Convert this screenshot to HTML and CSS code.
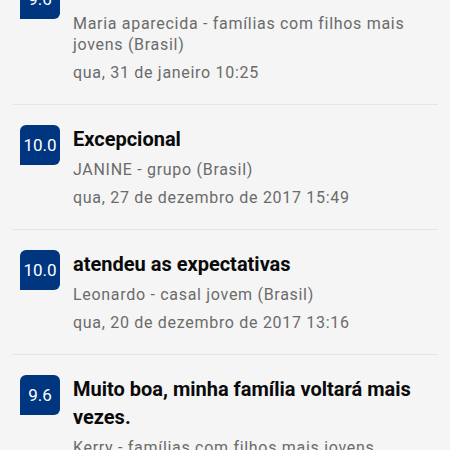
FILE: index.html
```html
<!DOCTYPE html>
<html>
  <head>
    <meta charset='utf-8' />
    <title>Avaliações</title>
    <link rel="stylesheet" href="styles.css">
  </head>
  <body>
    <main id='reviews'>
      <div class='review'>
        <div class='score'>9.6</div>
        <div class='body'>
          <div class='title'>Excelente</div>
          <div class='author'>Maria aparecida - famílias com filhos mais jovens (Brasil)</div>
          <div class='date'>qua, 31 de janeiro 10:25</div>
        </div>
      </div>
      <div class='review'>
        <div class='score'>10.0</div>
        <div class='body'>
          <div class='title'>Excepcional</div>
          <div class='author'>JANINE - grupo (Brasil)</div>
          <div class='date'>qua, 27 de dezembro de 2017 15:49</div>
        </div>
      </div>
      <div class='review'>
        <div class='score'>10.0</div>
        <div class='body'>
          <div class='title'>atendeu as expectativas</div>
          <div class='author'>Leonardo - casal jovem (Brasil)</div>
          <div class='date'>qua, 20 de dezembro de 2017 13:16</div>
        </div>
      </div>
      <div class='review'>
        <div class='score'>9.6</div>
        <div class='body'>
          <div class='title'>Muito boa, minha família voltará mais vezes.</div>
          <div class='author'>Kerry - famílias com filhos mais jovens (Brasil)</div>
          <div class='date'>ter, 12 de dezembro de 2017 09:02</div>
        </div>
      </div>
    </main>
  </body>
</html>
```

FILE: styles.css
```css
* {
  box-sizing: border-box;
}
body, html {
  margin: 0;
  padding: 0;
  width: 100vw;
  height: 100vh;
  overflow: hidden;
}
body {
  background: #f5f5f5;
  font-family: Roboto, "Liberation Sans", sans-serif;
}
#reviews {
  margin-top: -41px;
}
.review {
  display: flex;
  align-items: flex-start;
  gap: 13px;
  margin: 0 12px;
  padding: 20px 18px 21px 8px;
  border-bottom: 1px solid #e6e6e6;
}
.score {
  flex: none;
  width: 40px;
  height: 40px;
  display: flex;
  align-items: center;
  justify-content: center;
  background: #003580;
  color: #fff;
  font-size: 17px;
  border-radius: 6px 6px 6px 0;
}
.body {
  flex: 1;
}
.title {
  font-size: 20px;
  font-weight: bold;
  line-height: 28px;
  color: #0a0a0a;
}
.author, .date {
  font-size: 16px;
  line-height: 21px;
  letter-spacing: 0.7px;
  color: #6b6b6b;
}
.author {
  margin-top: 6px;
}
.date {
  margin-top: 7px;
}
```
